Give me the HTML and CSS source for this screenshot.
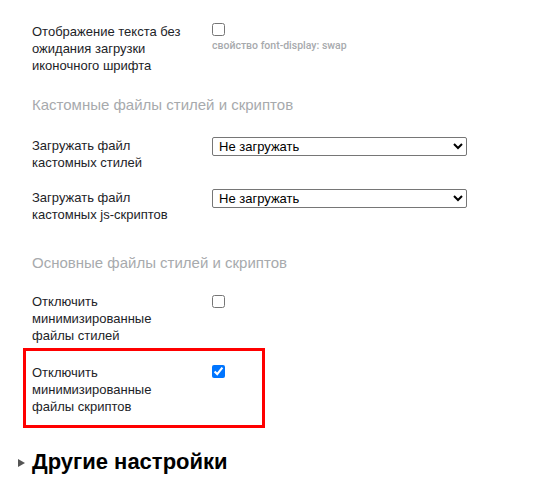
FILE: index.html
```html
<!DOCTYPE html>
<html lang="ru">
<head>
<meta charset="utf-8">
<link rel="stylesheet" href="styles.css">
</head>
<body>
<div class="page">
  <div class="row r1">
    <div class="label">Отображение текста без ожидания загрузки иконочного шрифта</div>
    <div class="field">
      <input type="checkbox" class="cb">
      <div class="note">свойство font-display: swap</div>
    </div>
  </div>

  <h3 class="section s1">Кастомные файлы стилей и скриптов</h3>

  <div class="row r2">
    <div class="label">Загружать файл кастомных стилей</div>
    <div class="field">
      <select class="sel"><option>Не загружать</option></select>
    </div>
  </div>

  <div class="row r3">
    <div class="label">Загружать файл кастомных js-скриптов</div>
    <div class="field">
      <select class="sel"><option>Не загружать</option></select>
    </div>
  </div>

  <h3 class="section s2">Основные файлы стилей и скриптов</h3>

  <div class="row r4">
    <div class="label">Отключить минимизированные файлы стилей</div>
    <div class="field">
      <input type="checkbox" class="cb">
    </div>
  </div>

  <div class="row highlight">
    <div class="label">Отключить минимизированные файлы скриптов</div>
    <div class="field">
      <input type="checkbox" class="cb" checked>
    </div>
  </div>

  <div class="other">
    <span class="tri"></span>
    <h2 class="other-title">Другие настройки</h2>
  </div>
</div>
</body>
</html>
```

FILE: styles.css
```css
html, body {
  margin: 0;
  padding: 0;
  background: #ffffff;
}

body {
  font-family: "Liberation Sans", Arial, sans-serif;
  font-size: 13px;
  line-height: 17px;
  color: #1d2327;
}

.page {
  padding-left: 32px;
  padding-top: 3px;
  overflow: hidden;
}

.row {
  display: flex;
  align-items: flex-start;
}

.label {
  width: 160px;
  padding-right: 20px;
}

.field {
  display: flex;
  flex-direction: column;
  align-items: flex-start;
}

.cb {
  display: block;
  width: 13px;
  height: 13px;
  margin: 0;
}

.note {
  margin-top: 3px;
  font-family: Roboto, "Liberation Sans", sans-serif;
  font-size: 10.5px;
  line-height: 13px;
  font-weight: 500;
  color: #a7aaad;
}

.sel {
  display: block;
  width: 255px;
  height: 19px;
  margin: 0;
  font-family: "Liberation Sans", Arial, sans-serif;
  font-size: 13px;
  color: #000;
  background: #fff;
  border: 1px solid #767676;
  border-radius: 2px;
  padding: 0 0 0 2px;
}

.section {
  margin: 0;
  font-size: 15px;
  line-height: 18px;
  font-weight: normal;
  color: #a7aaad;
}

.r1 { margin-top: 20px; }
.s1 { margin-top: 22px; }
.r2 { margin-top: 23px; }
.r3 { margin-top: 18px; }
.s2 { margin-top: 31px; }
.r4 { margin-top: 21px; }
.r4 .cb { margin-top: 2px; }

.highlight {
  margin-top: 4px;
  margin-left: -9px;
  width: 242px;
  box-sizing: border-box;
  border: 3px solid #ff0000;
  padding: 13px 0 10px 6px;
}

.highlight .cb { margin-top: 1px; }

.other {
  display: flex;
  align-items: center;
  margin-top: 22px;
  margin-left: -14px;
}

.tri {
  width: 0;
  height: 0;
  border-top: 4px solid transparent;
  border-bottom: 4px solid transparent;
  border-left: 7px solid #555;
  margin-right: 7px;
  margin-top: 1px;
}

.other-title {
  margin: 0;
  font-size: 22px;
  line-height: 24px;
  font-weight: bold;
  color: #000;
}
```
